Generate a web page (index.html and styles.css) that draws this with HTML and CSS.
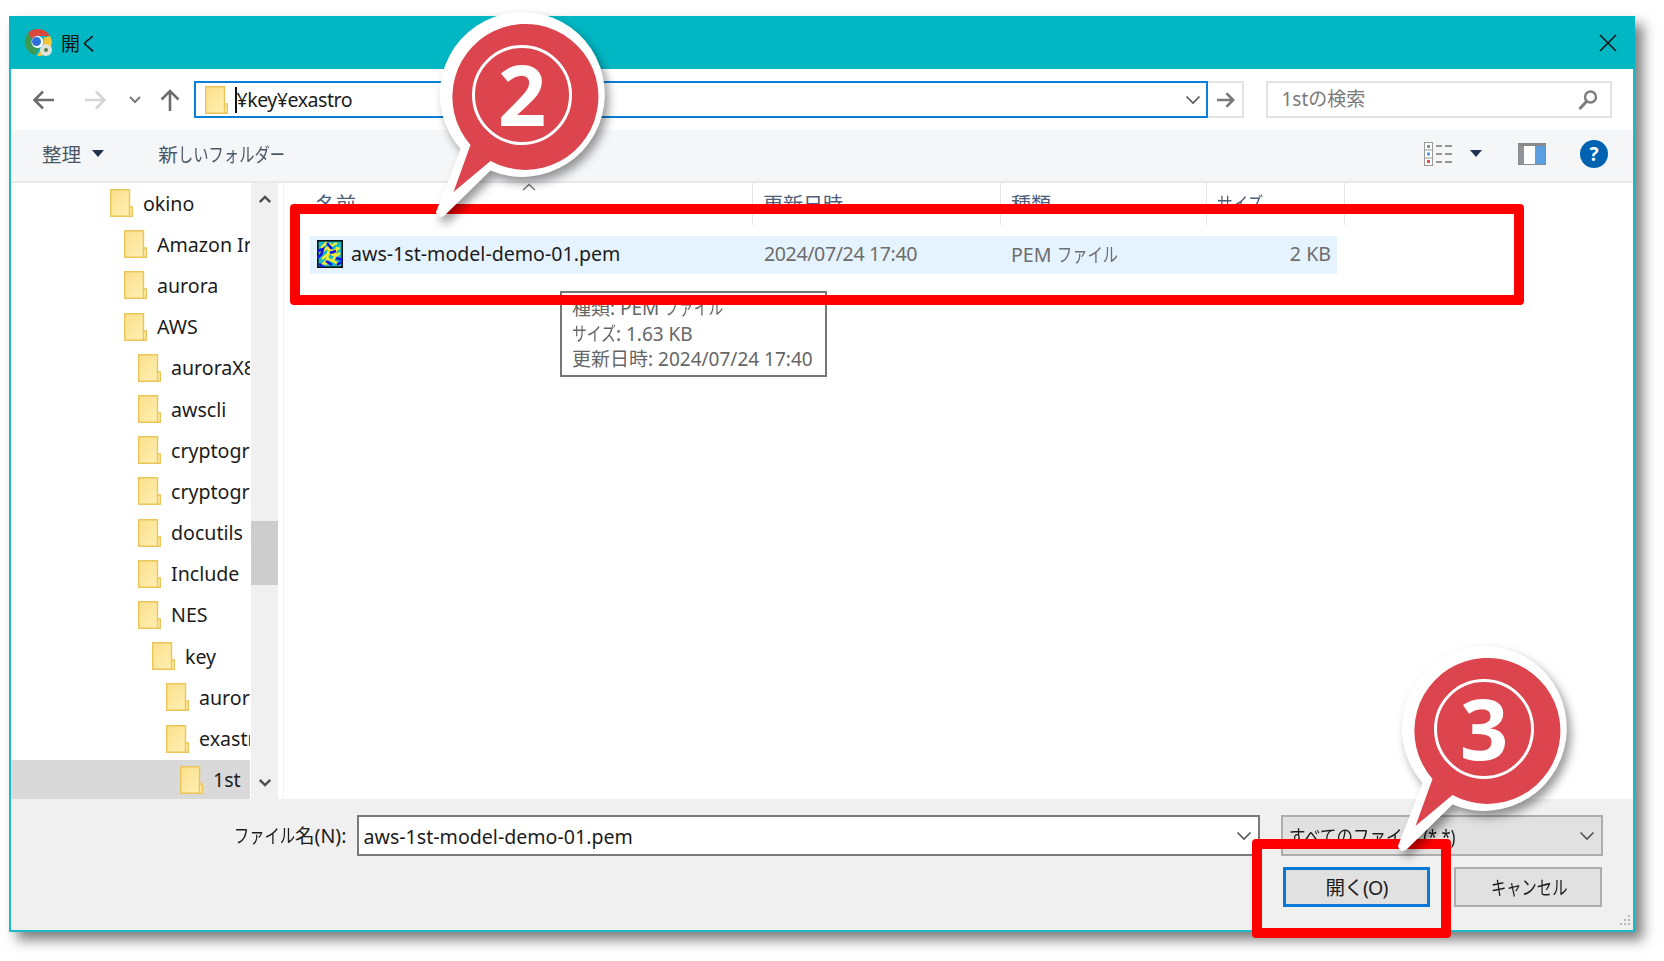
FILE: index.html
```html
<!DOCTYPE html>
<html lang="ja">
<head>
    <meta charset="UTF-8">
    <title>開く</title>
    <link rel="stylesheet" href="styles.css">
</head>
<body>
    <svg class="defs" width="0" height="0">
        <defs>
            <linearGradient id="folderFill" x1="0" y1="0" x2="1" y2="1">
                <stop offset="0" stop-color="#fbe08c"/>
                <stop offset="1" stop-color="#fff0b4"/>
            </linearGradient>
            <symbol id="folder" viewBox="0 0 23 28">
                <path d="M.7.7H19.5V18H22.3V27.3H.7Z" fill="url(#folderFill)" stroke="#eac55a" stroke-width="1.4"/>
                <path d="M19.5 18V27.3" stroke="#eac55a" stroke-width="1.4"/>
            </symbol>
            <symbol id="chevron" viewBox="0 0 16 10">
                <path d="M1.5 1.5L8 8L14.5 1.5" fill="none" stroke="#555" stroke-width="1.6"/>
            </symbol>
            <symbol id="badge" viewBox="-100 -90 200 240">
                <path d="M-61.5 55A82.5 82.5 0 1 1-31.5 76.5L-77 121Q-84 126-86 118Z" fill="#fff"/>
                <path d="M-51.5 51A73 73 0 1 1-31.5 67L-68.5 98Z" fill="#dc444e"/>
                <circle cx="0" cy="1" r="48.5" fill="none" stroke="#fff" stroke-width="3"/>
            </symbol>
        </defs>
    </svg>

    <div class="window">
        <div class="titlebar">
            <svg class="app-icon" viewBox="0 0 30 30">
                <path d="M14 1A13.500 13.500 0 0 1 26 8H14A6 6 0 0 0 8 12L4 5A13.500 13.500 0 0 1 14 1Z" fill="#d9483b"/>
                <path d="M4 5L10 16A6 6 0 0 0 15 20L11 27A13.500 13.500 0 0 1 4 5Z" fill="#3d9a52"/>
                <path d="M26 8A13.500 13.500 0 0 1 13 28L19 17A6 6 0 0 0 19 10Z" fill="#f6c533"/>
                <circle cx="13.500" cy="14" r="6" fill="#fff"/>
                <circle cx="12.500" cy="13.500" r="4.500" fill="#2f6fdc"/>
                <circle cx="22" cy="22" r="6" fill="#dfe4da"/>
                <circle cx="22" cy="22" r="2" fill="#5e7d4e"/>
            </svg>
            <span class="title-text">開く</span>
            <svg class="close-icon" viewBox="0 0 18 18"><path d="M1 1L17 17M17 1L1 17" stroke="#111" stroke-width="1.5"/></svg>
        </div>

        <div class="addressbar">
            <svg class="nav nav-back" viewBox="0 0 24 22"><path d="M22 11H3M11 2.500L2.500 11L11 19.500" fill="none" stroke="#6d6d6d" stroke-width="2.600"/></svg>
            <svg class="nav nav-forward" viewBox="0 0 24 22"><path d="M2 11H21M13 2.500L21.500 11L13 19.500" fill="none" stroke="#d4d4d4" stroke-width="2.600"/></svg>
            <svg class="nav-recent" viewBox="0 0 16 10"><path d="M3 2L8 7L13 2" fill="none" stroke="#7a7a7a" stroke-width="2"/></svg>
            <svg class="nav nav-up" viewBox="0 0 22 24"><path d="M11 23V3M2.500 11.500L11 3L19.500 11.500" fill="none" stroke="#6d6d6d" stroke-width="2.600"/></svg>
            <div class="address-box">
                <svg class="folder-icon"><use href="#folder"/></svg>
                <span class="address-text">¥key¥exastro</span>
                <svg class="combo-chevron"><use href="#chevron"/></svg>
            </div>
            <div class="go-button">
                <svg viewBox="0 0 22 20" width="20" height="18"><path d="M1 10H19M11.500 2.500L19 10L11.500 17.500" fill="none" stroke="#7a7a7a" stroke-width="2.800"/></svg>
            </div>
            <div class="search-box">
                <span class="search-text">1stの検索</span>
                <svg class="search-icon" viewBox="0 0 22 22"><circle cx="13.500" cy="8" r="5.500" fill="none" stroke="#7b7b7b" stroke-width="2.400"/><path d="M9.500 12.500L2.500 20" stroke="#7b7b7b" stroke-width="3"/></svg>
            </div>
        </div>

        <div class="toolbar">
            <span class="tool-btn">整理</span>
            <span class="caret"></span>
            <span class="tool-btn tool-new">新<span class="kana kana-7">しいフォルダー</span></span>
            <div class="tool-right">
                <svg class="view-icon" viewBox="0 0 29 24">
                    <rect x=".5" y=".5" width="8" height="23" fill="#fff" stroke="#9a9a9a"/>
                    <path d="M.5 8H8.500M.5 16H8.500" stroke="#9a9a9a"/>
                    <rect x="3" y="3" width="3" height="3" fill="#7a9a9a"/>
                    <rect x="3" y="10.500" width="3" height="3" fill="#4d9ae0"/>
                    <rect x="3" y="18" width="3" height="3" fill="#e0554d"/>
                    <path d="M12 4H18M21 4H28M12 12H18M21 12H28M12 20H18M21 20H28" stroke="#777" stroke-width="1.600"/>
                </svg>
                <span class="caret caret-view"></span>
                <svg class="pane-icon" viewBox="0 0 28 22">
                    <rect x=".5" y=".5" width="27" height="21" fill="#fff" stroke="#8a8a8a"/>
                    <rect x="1" y="1" width="5" height="20" fill="#8f9499"/>
                    <rect x="17" y="3" width="10" height="18" fill="#5a9fe0"/>
                    <rect x="1" y="1" width="26" height="2" fill="#8a8a8a"/>
                </svg>
                <span class="help-icon">?</span>
            </div>
        </div>

        <div class="content">
            <div class="tree-pane">
                <ul class="tree">
                    <li class="depth-0"><svg class="folder-icon"><use href="#folder"/></svg>okino</li>
                    <li class="depth-1"><svg class="folder-icon"><use href="#folder"/></svg>Amazon Ir</li>
                    <li class="depth-1"><svg class="folder-icon"><use href="#folder"/></svg>aurora</li>
                    <li class="depth-1"><svg class="folder-icon"><use href="#folder"/></svg>AWS</li>
                    <li class="depth-2"><svg class="folder-icon"><use href="#folder"/></svg>auroraX8</li>
                    <li class="depth-2"><svg class="folder-icon"><use href="#folder"/></svg>awscli</li>
                    <li class="depth-2"><svg class="folder-icon"><use href="#folder"/></svg>cryptogra</li>
                    <li class="depth-2"><svg class="folder-icon"><use href="#folder"/></svg>cryptogra</li>
                    <li class="depth-2"><svg class="folder-icon"><use href="#folder"/></svg>docutils</li>
                    <li class="depth-2"><svg class="folder-icon"><use href="#folder"/></svg>Include</li>
                    <li class="depth-2"><svg class="folder-icon"><use href="#folder"/></svg>NES</li>
                    <li class="depth-3"><svg class="folder-icon"><use href="#folder"/></svg>key</li>
                    <li class="depth-4"><svg class="folder-icon"><use href="#folder"/></svg>aurora</li>
                    <li class="depth-4"><svg class="folder-icon"><use href="#folder"/></svg>exastro</li>
                    <li class="depth-5 selected"><svg class="folder-icon"><use href="#folder"/></svg>1st</li>
                </ul>
                <div class="tree-scroll">
                    <svg class="scroll-arrow" viewBox="0 0 16 10"><path d="M2 8L8 2L14 8" fill="none" stroke="#505050" stroke-width="2.800"/></svg>
                    <div class="scroll-track"><div class="scroll-thumb"></div></div>
                    <svg class="scroll-arrow" viewBox="0 0 16 10"><path d="M2 2L8 8L14 2" fill="none" stroke="#505050" stroke-width="2.800"/></svg>
                </div>
            </div>

            <div class="file-pane">
                <div class="file-head">
                    <div class="col col-name">名前<svg class="sort-arrow" viewBox="0 0 14 8"><path d="M1 7L7 1.500L13 7" fill="none" stroke="#777" stroke-width="1.500"/></svg></div>
                    <div class="col col-date">更新日時</div>
                    <div class="col col-type">種類</div>
                    <div class="col col-size"><span class="kana kana-3">サイズ</span></div>
                </div>
                <div class="file-row">
                    <div class="file-name">
                        <svg class="pem-icon" viewBox="0 0 26 28">
                            <rect x=".8" y=".8" width="24.400" height="26.400" fill="#18b8c4" stroke="#101010" stroke-width="1.600"/>
                            <path d="M4 8L9 3L14 6L20 3M3 13L10 8L16 11L23 8M5 19L12 13L19 16L23 13M5 25L11 19L18 22L22 25M13 3L9 25M20 7L16 22" fill="none" stroke="#f5ec30" stroke-width="2.400"/>
                            <path d="M0 11L6 9L4 15L0 18M10 3L15 9M13 13L19 11M9 21L15 25M19 18L26 20M2 24L7 27M20 25L24 22" fill="none" stroke="#1414e6" stroke-width="2.600"/>
                        </svg>
                        <span>aws-1st-model-demo-01.pem</span>
                    </div>
                    <div class="file-date">2024/07/24 17:40</div>
                    <div class="file-type">PEM <span class="kana kana-4">ファイル</span></div>
                    <div class="file-size">2 KB</div>
                </div>
                <div class="tooltip">
                    <div>種類: PEM <span class="kana kana-4">ファイル</span></div>
                    <div><span class="kana kana-3">サイズ</span>: 1.63 KB</div>
                    <div>更新日時: 2024/07/24 17:40</div>
                </div>
            </div>
        </div>

        <div class="footer">
            <div class="footer-row">
                <label class="name-label"><span class="kana kana-4">ファイル</span>名(N):</label>
                <div class="name-input">
                    <span>aws-1st-model-demo-01.pem</span>
                    <svg class="combo-chevron"><use href="#chevron"/></svg>
                </div>
                <div class="filter-select">
                    <span class="filter-text">すべてのファイル (*.*)</span>
                    <svg class="combo-chevron"><use href="#chevron"/></svg>
                </div>
            </div>
            <div class="button-row">
                <div class="btn btn-open">開く(O)</div>
                <div class="btn btn-cancel"><span class="kana kana-5">キャンセル</span></div>
            </div>
            <svg class="grip" viewBox="0 0 14 14">
                <path d="M11 1h2v2h-2zM7 5h2v2H7zM11 5h2v2h-2zM3 9h2v2H3zM7 9h2v2H7zM11 9h2v2h-2z" fill="#b8b8b8"/>
            </svg>
        </div>
    </div>

    <!-- 注釈 -->
    <div class="mark mark-file"></div>
    <div class="mark mark-open"></div>
    <svg class="callout callout-2" viewBox="-100 -90 200 240">
        <use href="#badge" x="-100" y="-90" width="200" height="240"/>
        <text class="callout-num" x="0" y="32">2</text>
    </svg>
    <svg class="callout callout-3" viewBox="-100 -90 200 240">
        <use href="#badge" x="-100" y="-90" width="200" height="240"/>
        <text class="callout-num" x="0" y="32">3</text>
    </svg>
</body>
</html>
```

FILE: styles.css
```css
html, body {
    margin: 0;
    padding: 0;
    height: 961px;
    overflow: hidden;
    background: #fff;
}

body {
    position: relative;
    font-family: "Noto Sans", "Noto Sans CJK JP", sans-serif;
    font-size: 19.600px;
    color: #1c1c1c;
}

.defs {
    position: absolute;
}

/* 仮名だけ細い UI フォントに寄せる */
.kana {
    display: inline-block;
    transform: scaleX(0.78);
    transform-origin: left center;
}

.kana-3 { margin-right: -0.66em; }
.kana-4 { margin-right: -0.88em; }
.kana-5 { margin-right: -1.1em; }
.kana-7 { margin-right: -1.54em; }

.window {
    display: flex;
    flex-direction: column;
    box-sizing: border-box;
    width: 1626px;
    height: 916px;
    margin: 16px 0 0 9px;
    border: 2px solid #1fb8c6;
    border-top: none;
    background: #fff;
    box-shadow: 8px 8px 12px rgba(0, 0, 0, 0.5);
}

.titlebar {
    display: flex;
    align-items: center;
    flex: none;
    height: 53px;
    margin: 0 -2px;
    padding: 0 18px 0 15px;
    background: #00b7c3;
}

.app-icon {
    width: 30px;
    height: 30px;
}

.title-text {
    margin-left: 7px;
    font-size: 19px;
    color: #111;
}

.close-icon {
    width: 18px;
    height: 18px;
    margin-left: auto;
}

.addressbar {
    display: flex;
    align-items: center;
    flex: none;
    height: 61px;
}

.nav {
    flex: none;
}

.nav-back {
    width: 24px;
    height: 22px;
    margin-left: 21px;
}

.nav-forward {
    width: 24px;
    height: 22px;
    margin-left: 27px;
}

.nav-recent {
    width: 16px;
    height: 10px;
    margin-left: 20px;
    margin-right: 16px;
}

.nav-up {
    width: 22px;
    height: 24px;
}

.address-box {
    display: flex;
    align-items: center;
    box-sizing: border-box;
    width: 1014px;
    height: 37px;
    margin-left: 12.500px;
    padding: 0 5px 0 9px;
    border: 2px solid #0a7fd9;
}

.address-box .folder-icon {
    width: 23px;
    height: 28px;
    margin-right: 0;
}

.address-text {
    margin-left: 7px;
    padding-left: 0;
    border-left: 2px solid #111;
    line-height: 26px;
    letter-spacing: -0.5px;
}

.combo-chevron {
    width: 16px;
    height: 10px;
    margin-left: auto;
}

.go-button {
    display: flex;
    align-items: center;
    justify-content: center;
    box-sizing: border-box;
    width: 36px;
    height: 37px;
    padding-left: 3px;
    border: 2px solid #e4e4e4;
    border-left: none;
}

.search-box {
    display: flex;
    align-items: center;
    box-sizing: border-box;
    width: 346px;
    height: 37px;
    margin-left: 22px;
    padding: 0 11px 0 14px;
    border: 2px solid #e2e2e2;
}

.search-text {
    margin-bottom: 4px;
    color: #7a7a7a;
    font-size: 19px;
}

.search-icon {
    width: 22px;
    height: 22px;
    margin-left: auto;
}

.toolbar {
    display: flex;
    align-items: center;
    flex: none;
    height: 47px;
    padding: 0 0 4px 31px;
    border-bottom: 2px solid #e8e8e8;
    background: #f5f6f7;
    color: #4a5666;
}

.tool-new {
    margin-left: 54px;
}

.caret {
    width: 0;
    height: 0;
    margin-left: 11px;
    border-left: 6.500px solid transparent;
    border-right: 6.500px solid transparent;
    border-top: 7px solid #1f3350;
}

.caret-view {
    margin-left: 17px;
}

.tool-right {
    display: flex;
    align-items: center;
    margin-left: auto;
    padding-right: 25px;
}

.view-icon {
    width: 29px;
    height: 24px;
}

.pane-icon {
    width: 28px;
    height: 22px;
    margin-left: 36px;
}

.help-icon {
    display: flex;
    align-items: center;
    justify-content: center;
    width: 28px;
    height: 28px;
    margin-left: 34px;
    border-radius: 50%;
    background: #0063b1;
    color: #fff;
    font-size: 19px;
    font-weight: 700;
}

.content {
    display: flex;
    flex: 1;
    min-height: 0;
}

.tree-pane {
    display: flex;
    flex: none;
    width: 272px;
    height: 100%;
}

.tree {
    flex: none;
    width: 239px;
    margin: 0;
    padding: 0;
    overflow: hidden;
    list-style: none;
}

.tree li {
    display: flex;
    align-items: center;
    box-sizing: border-box;
    height: 41.200px;
    padding-bottom: 1px;
    overflow: hidden;
    white-space: nowrap;
}

.folder-icon {
    flex: none;
    width: 23px;
    height: 28px;
    margin-right: 10px;
}

.depth-0 { padding-left: 99px; }
.depth-1 { padding-left: 113px; }
.depth-2 { padding-left: 127px; }
.depth-3 { padding-left: 141px; }
.depth-4 { padding-left: 155px; }
.depth-5 { padding-left: 169px; }

.tree li.selected {
    background: #d9d9d9;
}

.tree-scroll {
    display: flex;
    flex-direction: column;
    align-items: center;
    flex: none;
    width: 27px;
    margin-left: 1px;
    background: #f0f0f0;
}

.scroll-arrow {
    flex: none;
    width: 14px;
    height: 9px;
    margin: 12px 0;
}

.scroll-track {
    flex: 1;
    width: 100%;
}

.scroll-thumb {
    width: 100%;
    height: 64px;
    margin-top: 305px;
    background: #cdcdcd;
}

.file-pane {
    position: relative;
    flex: 1;
    min-width: 0;
    border-left: 1px solid #f2f2f2;
}

.file-head {
    display: flex;
    height: 42px;
    color: #4c607a;
    font-size: 20px;
}

.col {
    position: relative;
    box-sizing: border-box;
    padding: 6px 0 0 10px;
    border-right: 1px solid #e5e5e5;
}

.col-name {
    width: 469px;
    padding-left: 32px;
}

.col-date { width: 248px; }
.col-type { width: 206px; }
.col-size { width: 138px; }

.sort-arrow {
    position: absolute;
    left: 238px;
    top: 0;
    width: 14px;
    height: 8px;
}

.file-row {
    display: flex;
    align-items: center;
    box-sizing: border-box;
    width: 1027px;
    height: 38px;
    margin: 11px 0 0 26px;
    padding-bottom: 3px;
    background: #e5f3ff;
    color: #6d6d6d;
}

.file-name {
    display: flex;
    align-items: center;
    flex: none;
    width: 454px;
    padding-left: 7px;
    box-sizing: border-box;
    color: #1c1c1c;
}

.pem-icon {
    flex: none;
    width: 26px;
    height: 28px;
    margin-right: 8px;
}

.file-date {
    flex: none;
    width: 247px;
    letter-spacing: -0.4px;
}

.file-type {
    flex: none;
    width: 206px;
}

.file-size {
    flex: 1;
    padding-right: 6px;
    text-align: right;
}

.tooltip {
    position: absolute;
    left: 276px;
    top: 108px;
    box-sizing: border-box;
    width: 267px;
    height: 86px;
    padding: 3px 0 0 10px;
    overflow: hidden;
    border: 2px solid #767676;
    background: #fff;
    color: #666;
    font-size: 19px;
    line-height: 25.500px;
    white-space: nowrap;
}

.footer {
    position: relative;
    flex: none;
    box-sizing: border-box;
    height: 131px;
    padding-top: 16px;
    background: #f0f0f0;
}

.footer-row {
    display: flex;
    align-items: center;
}

.name-label {
    flex: none;
    width: 345.500px;
    padding-right: 10px;
    padding-bottom: 2px;
    box-sizing: border-box;
    text-align: right;
    white-space: nowrap;
}

.name-input {
    display: flex;
    align-items: center;
    box-sizing: border-box;
    width: 903px;
    height: 41px;
    padding: 1px 6px 0 5px;
    border: 2px solid #7a7a7a;
    background: #fff;
}

.filter-select {
    display: flex;
    align-items: center;
    box-sizing: border-box;
    width: 322px;
    height: 41px;
    margin-left: 21px;
    padding: 0 6px;
    border: 2px solid #adadad;
    background: #e1e1e1;
    white-space: nowrap;
}

.filter-text {
    display: inline-block;
    width: 190px;
    transform: scaleX(0.84);
    transform-origin: left center;
}

.button-row {
    display: flex;
    gap: 24px;
    margin: 11px 0 0 1272px;
}

.btn {
    display: flex;
    align-items: center;
    justify-content: center;
    box-sizing: border-box;
    height: 40px;
    padding-bottom: 2px;
    border: 2px solid #adadad;
    background: #e1e1e1;
}

.btn-open {
    width: 147px;
    border: 3px solid #0a78d7;
    letter-spacing: -0.8px;
}

.btn-cancel {
    width: 148px;
    padding-left: 2px;
}

.grip {
    position: absolute;
    right: 2px;
    bottom: 2px;
    width: 14px;
    height: 14px;
}

.mark {
    position: absolute;
    box-sizing: border-box;
    border: 10px solid #f00;
    border-radius: 4px;
}

.mark-file {
    left: 290px;
    top: 204px;
    width: 1234px;
    height: 101px;
}

.mark-open {
    left: 1252px;
    top: 839px;
    width: 199px;
    height: 99px;
}

.callout {
    position: absolute;
    width: 200px;
    height: 240px;
    filter: drop-shadow(4px 6px 5px rgba(0, 0, 0, 0.4));
}

.callout-2 {
    left: 421.500px;
    top: 4px;
}

.callout-3 {
    left: 1384px;
    top: 638px;
}

.callout-num {
    fill: #fff;
    font-family: "Noto Sans", sans-serif;
    font-size: 85px;
    font-weight: 700;
    text-anchor: middle;
}
```
